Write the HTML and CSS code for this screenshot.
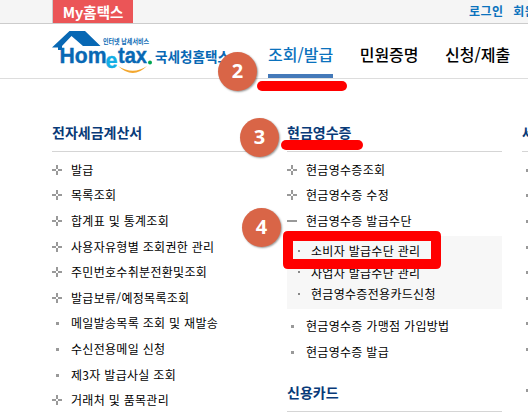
FILE: index.html
```html
<!DOCTYPE html>
<html lang="ko">
<head>
<meta charset="utf-8">
<title>국세청홈택스</title>
<link rel="stylesheet" href="styles.css">
</head>
<body>
<div class="topbar">
  <div class="my-tab">My홈택스</div>
  <div class="util"><span>로그인</span><span>회원가입</span></div>
</div>
<header class="header">
  <svg class="logo" width="180" height="48" viewBox="52 28 180 48">
    <path class="blue" d="M52 47.500 69.500 31H85L100.500 46H83L71.500 36 62 46V50H58V47.500Z"/>
    <text class="tagline" x="103" y="44" textLength="46" lengthAdjust="spacingAndGlyphs">인터넷 납세서비스</text>
    <text class="word blue" x="59.500" y="63" textLength="47" lengthAdjust="spacingAndGlyphs">Hom</text>
    <text class="word cyan" x="105.500" y="67.500" textLength="12" lengthAdjust="spacingAndGlyphs">e</text>
    <text class="word blue" x="118" y="63" textLength="29" lengthAdjust="spacingAndGlyphs">tax</text>
    <circle class="green" cx="150" cy="62.500" r="2"/>
    <path class="smile" d="M118 66Q133 80 147 66Q133 75.500 118 66Z"/>
    <text class="office blue" x="155" y="62" textLength="75" lengthAdjust="spacingAndGlyphs">국세청홈택스</text>
  </svg>
  <nav class="nav">
    <a class="active">조회/발급</a>
    <a>민원증명</a>
    <a>신청/제출</a>
  </nav>
</header>
<main class="columns">
  <section>
    <h2>전자세금계산서</h2>
    <ul class="list">
      <li class="plus">발급</li>
      <li class="plus">목록조회</li>
      <li class="plus">합계표 및 통계조회</li>
      <li class="plus">사용자유형별 조회권한 관리</li>
      <li class="plus">주민번호수취분전환및조회</li>
      <li class="plus">발급보류/예정목록조회</li>
      <li class="dot">메일발송목록 조회 및 재발송</li>
      <li class="dot">수신전용메일 신청</li>
      <li class="dot">제3자 발급사실 조회</li>
      <li class="plus">거래처 및 품목관리</li>
    </ul>
  </section>
  <section>
    <h2>현금영수증</h2>
    <ul class="list">
      <li class="plus">현금영수증조회</li>
      <li class="plus">현금영수증 수정</li>
      <li class="minus">현금영수증 발급수단</li>
    </ul>
    <ul class="sub">
      <li>소비자 발급수단 관리</li>
      <li>사업자 발급수단 관리</li>
      <li>현금영수증전용카드신청</li>
    </ul>
    <ul class="list after">
      <li class="dot">현금영수증 가맹점 가입방법</li>
      <li class="dot">현금영수증 발급</li>
    </ul>
    <h2 class="second">신용카드</h2>
  </section>
  <section class="clipped">
    <h2>세금신고</h2>
    <ul class="list">
      <li class="dot"></li><li class="dot"></li><li class="dot"></li><li class="dot"></li>
      <li class="dot"></li><li class="dot"></li><li class="dot"></li><li class="dot"></li>
      <li class="dot gap"></li>
    </ul>
  </section>
</main>
<div class="mark bar-2"></div>
<div class="mark bar-3"></div>
<svg class="frame" width="158" height="38"><path fill-rule="evenodd" d="M5 0H153Q158 0 158 5V33Q158 38 153 38H5Q0 38 0 33V5Q0 0 5 0ZM10 10V28H148V10Z"/></svg>
<div class="step step-2">2</div>
<div class="step step-3">3</div>
<div class="step step-4">4</div>
</body>
</html>
```
FILE: styles.css
```css
* { box-sizing: border-box; }
body {
  margin: 0;
  width: 528px;
  height: 414px;
  overflow: hidden;
  position: relative;
  background: #fff;
  color: #000;
  font-family: "Noto Sans CJK KR", sans-serif;
  font-size: 12px;
}
ul, h2 { margin: 0; padding: 0; list-style: none; }
.topbar {
  display: flex;
  justify-content: space-between;
  height: 24px;
  padding-left: 52px;
  background: #f5f5f5;
  border-bottom: 1px solid #ccc;
}
.my-tab {
  width: 81px;
  height: 23px;
  border-left: 1px solid #ccc;
  background: #eb5557;
  color: #fff;
  font-size: 14.5px;
  font-weight: 700;
  line-height: 23px;
  text-align: center;
}
.util {
  display: flex;
  gap: 10px;
  width: 59px;
  overflow: hidden;
  white-space: nowrap;
  color: #0b72bd;
  font-weight: 700;
  line-height: 21px;
  letter-spacing: 0.4px;
}
.header {
  display: flex;
  height: 55px;
  padding-left: 52px;
  border-bottom: 1px solid #ddd;
}
.logo { margin-top: 4px; flex: none; }
.blue { fill: #0868b4; }
.cyan { fill: #12aee5; }
.green { fill: #00a651; }
.smile { fill: #f3a72e; }
.word { font: 700 22.5px "Liberation Sans", sans-serif; }
.word.blue { stroke: #0868b4; stroke-width: 0.4px; }
.word.cyan { stroke: #12aee5; stroke-width: 0.4px; }
.tagline { font-size: 6.5px; font-weight: 700; fill: #0868b4; }
.office { font-size: 14px; font-weight: 700; }
.nav {
  display: flex;
  gap: 26.5px;
  margin-left: 36px;
  font-size: 16px;
  font-weight: 500;
  line-height: 61px;
  white-space: nowrap;
}
.nav a { height: 54px; }
.nav .active { color: #0b72bd; border-bottom: 4px solid #4479b9; }
.columns {
  display: grid;
  grid-template-columns: 215px 215px 6px;
  column-gap: 20px;
  padding: 37px 0 0 52px;
  white-space: nowrap;
}
.clipped { overflow: hidden; }
h2 {
  height: 36px;
  border-bottom: 1px solid #d5d5d5;
  color: #083a78;
  font-size: 14px;
  font-weight: 700;
  line-height: 32px;
}
.list { padding-top: 5px; letter-spacing: 0.3px; }
.list li {
  display: flex;
  align-items: center;
  height: 25.6px;
  line-height: 18px;
}
.list li::before {
  content: "";
  flex: none;
  width: 10px;
  height: 10px;
  margin-right: 9px;
}
.plus::before {
  background:
    linear-gradient(#999, #999) 0 4px / 4px 2px no-repeat,
    linear-gradient(#999, #999) 6px 4px / 4px 2px no-repeat,
    linear-gradient(#999, #999) 4px 0 / 2px 4px no-repeat,
    linear-gradient(#999, #999) 4px 6px / 2px 4px no-repeat;
}
.minus::before { background: linear-gradient(#999, #999) 0 4px / 10px 2px no-repeat; }
.dot::before { background: linear-gradient(#999, #999) 4px 4px / 3px 3px no-repeat; }
.sub {
  height: 73px;
  margin-top: 2px;
  padding: 4px 0 0 11px;
  background: #f7f7f7;
  letter-spacing: 0.3px;
}
.sub li { display: flex; align-items: center; height: 21.5px; }
.sub li::before { content: ""; width: 2px; height: 2px; margin-right: 11px; background: #888; }
.after { padding-top: 4.5px; }
.second { margin-top: 11.5px; }
.gap { margin-top: 15px; }
.mark { position: absolute; height: 10px; border-radius: 5px; background: #f00; }
.bar-2 { left: 257px; top: 81px; width: 90px; }
.bar-3 { left: 281px; top: 140px; width: 82px; }
.frame { position: absolute; left: 283px; top: 231px; fill: #f00; }
.step {
  position: absolute;
  width: 39px;
  height: 39px;
  border-radius: 50%;
  background: #d96547;
  box-shadow: 1px 1px 2px rgba(0, 0, 0, 0.4);
  color: #fff;
  font: 700 20px/38px "Open Sans", sans-serif;
  text-align: center;
}
.step-2 { left: 218px; top: 52px; }
.step-3 { left: 240px; top: 118px; }
.step-4 { left: 242px; top: 208px; }
```
